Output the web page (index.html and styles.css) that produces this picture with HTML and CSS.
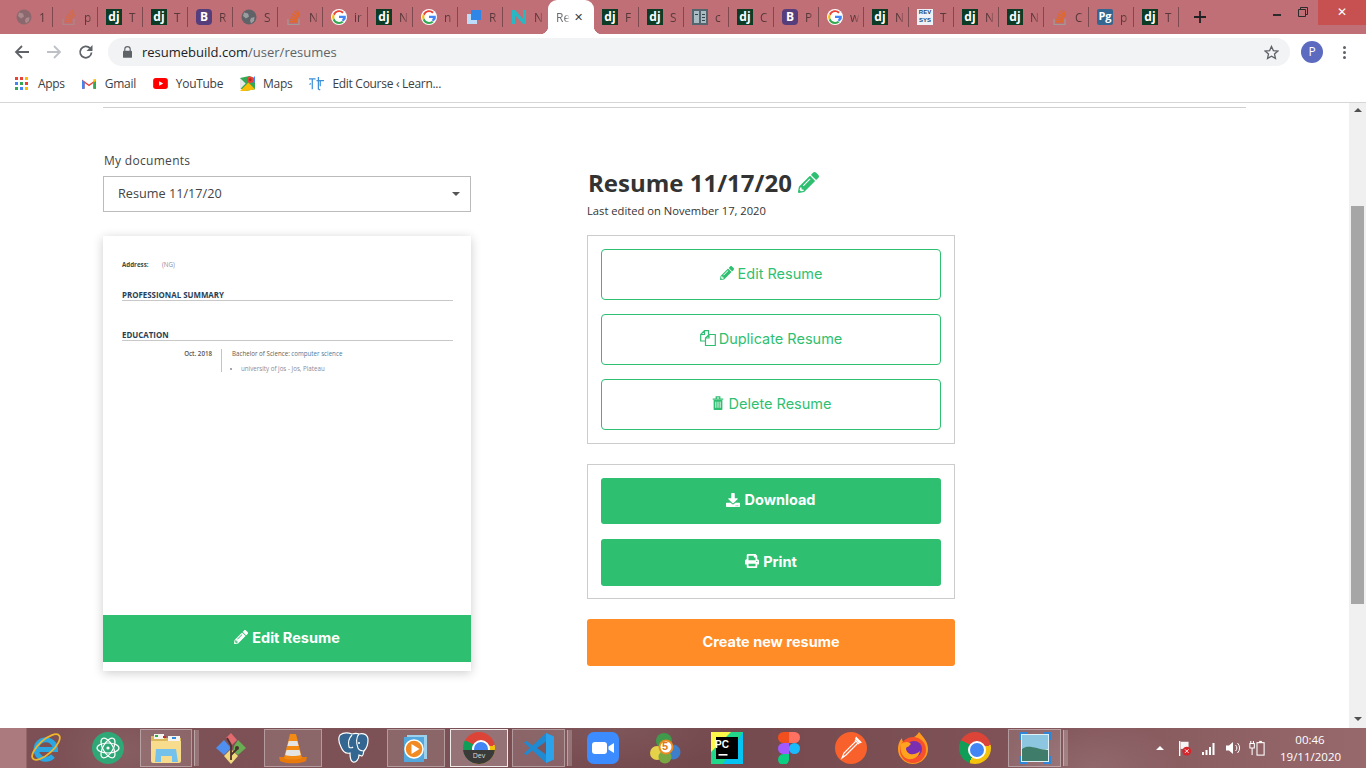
FILE: index.html
```html
<!DOCTYPE html>
<html lang="en">
<head>
    <meta charset="UTF-8">
    <title>Resume Build</title>
    <link rel="stylesheet" href="styles.css">
</head>
<body>
    <!-- shared icons -->
    <svg class="icon-defs" xmlns="http://www.w3.org/2000/svg">
        <symbol id="i-globe" viewBox="0 0 16 16">
            <circle cx="8" cy="8" r="7.5" fill="#5f6368"/>
            <path d="M3 3.5l4 1 1 3-3 2-3-2.5zM10 9l3.5-1-.5 4-3 2.5-1-3z" fill="#9a9da0"/>
        </symbol>
        <symbol id="i-stack" viewBox="0 0 16 16">
            <path d="M2 10v5.5h11V10" fill="none" stroke="#a29a98" stroke-width="1.2"/>
            <path d="M4 12h7v1.4H4zM4.200 9.600l6.900 1-.2 1.400-6.900-1zM5 7l6.500 2.300-.5 1.300-6.500-2.300zM6.500 4.300l5.900 3.700-.8 1.200-5.900-3.700zM9 1.800l4.500 5.300-1.100.9-4.500-5.300zM11.800.5l2.300 6.500-1.300.5-2.300-6.500z" fill="#e2672a"/>
        </symbol>
        <symbol id="i-google" viewBox="0 0 16 16">
            <circle cx="8" cy="8" r="8" fill="#fff"/>
            <path d="M8 3.100a4.900 4.900 0 0 1 3.300 1.300l1.500-1.500A7 7 0 0 0 2 5l1.800 1.400A4.600 4.600 0 0 1 8 3.100z" fill="#ea4335"/>
            <path d="M3.300 8c0-.6.100-1.100.3-1.600L1.800 5a7 7 0 0 0 0 6l1.800-1.400A4.700 4.700 0 0 1 3.300 8z" fill="#fbbc05"/>
            <path d="M8 12.900a4.700 4.700 0 0 1-4.400-3.300L1.800 11A7 7 0 0 0 8 15a6.700 6.700 0 0 0 4.600-1.700l-1.700-1.400a4.600 4.600 0 0 1-2.900 1z" fill="#34a853"/>
            <path d="M14.800 8.900V6.800H8v2.300h3.900a3.300 3.300 0 0 1-1.300 2l1.700 1.400c1.300-1 2.500-2.500 2.500-3.600z" fill="#4285f4"/>
        </symbol>
        <symbol id="i-pencil" viewBox="0 0 512 512">
            <path fill="currentColor" d="M497.900 142.100l-46.100 46.100c-4.700 4.700-12.300 4.700-17 0l-111-111c-4.700-4.700-4.700-12.300 0-17l46.100-46.100c18.700-18.700 49.100-18.700 67.900 0l60.100 60.100c18.800 18.700 18.800 49.100 0 67.900zM284.200 99.800L21.600 362.400.4 483.900c-2.900 16.400 11.400 30.600 27.800 27.800l121.500-21.300 262.600-262.600c4.700-4.700 4.700-12.300 0-17l-111-111c-4.800-4.700-12.400-4.700-17.100 0zM124.100 339.900c-5.500-5.500-5.500-14.300 0-19.800l154-154c5.500-5.500 14.300-5.500 19.800 0s5.500 14.300 0 19.800l-154 154c-5.500 5.500-14.300 5.500-19.800 0zM88 424h48v36.300l-64.500 11.300-31.100-31.100L51.700 376H88v48z"/>
        </symbol>
    </svg>

    <!-- browser tabs -->
    <div class="tabstrip">
        <div class="tab faded"><svg class="fav"><use href="#i-globe"/></svg><span class="tab-title">1</span></div>
        <div class="tab faded"><svg class="fav"><use href="#i-stack"/></svg><span class="tab-title">p</span></div>
        <div class="tab"><span class="fav fav-dj">dj</span><span class="tab-title">T</span></div>
        <div class="tab"><span class="fav fav-dj">dj</span><span class="tab-title">T</span></div>
        <div class="tab"><span class="fav fav-b">B</span><span class="tab-title">R</span></div>
        <div class="tab"><svg class="fav"><use href="#i-globe"/></svg><span class="tab-title">S</span></div>
        <div class="tab"><svg class="fav"><use href="#i-stack"/></svg><span class="tab-title">N</span></div>
        <div class="tab"><svg class="fav"><use href="#i-google"/></svg><span class="tab-title">ir</span></div>
        <div class="tab"><span class="fav fav-dj">dj</span><span class="tab-title">N</span></div>
        <div class="tab"><svg class="fav"><use href="#i-google"/></svg><span class="tab-title">n</span></div>
        <div class="tab">
            <svg class="fav" viewBox="0 0 16 16"><rect x="1" y="5" width="10" height="10" fill="#bcdcf7"/><rect x="5" y="1" width="10" height="10" fill="#2f86e6"/></svg>
            <span class="tab-title">R</span>
        </div>
        <div class="tab no-sep">
            <svg class="fav" viewBox="0 0 16 16"><path d="M1 1h3l8 9V1h3v14h-3L4 6v9H1z" fill="#2ab7c4"/></svg>
            <span class="tab-title">N</span>
        </div>
        <div class="tab tab-active"><span class="tab-title">Re</span><span class="tab-close">✕</span></div>
        <div class="tab"><span class="fav fav-dj">dj</span><span class="tab-title">F</span></div>
        <div class="tab"><span class="fav fav-dj">dj</span><span class="tab-title">S</span></div>
        <div class="tab">
            <svg class="fav" viewBox="0 0 16 16"><rect width="16" height="16" fill="#53666e"/><path d="M2 2h5v12H2zM9 2h5v12H9z" fill="#a9bcc4"/><path d="M10 5h3v1h-3zM10 8h3v1h-3zM10 11h3v1h-3zM3 5h3v1H3z" fill="#33444b"/></svg>
            <span class="tab-title">c</span>
        </div>
        <div class="tab"><span class="fav fav-dj">dj</span><span class="tab-title">C</span></div>
        <div class="tab"><span class="fav fav-b">B</span><span class="tab-title">P</span></div>
        <div class="tab"><svg class="fav"><use href="#i-google"/></svg><span class="tab-title">w</span></div>
        <div class="tab"><span class="fav fav-dj">dj</span><span class="tab-title">N</span></div>
        <div class="tab"><span class="fav fav-rev">REV<br>SYS</span><span class="tab-title">T</span></div>
        <div class="tab"><span class="fav fav-dj">dj</span><span class="tab-title">N</span></div>
        <div class="tab"><span class="fav fav-dj">dj</span><span class="tab-title">N</span></div>
        <div class="tab"><svg class="fav"><use href="#i-stack"/></svg><span class="tab-title">C</span></div>
        <div class="tab"><span class="fav fav-pg">Pg</span><span class="tab-title">p</span></div>
        <div class="tab"><span class="fav fav-dj">dj</span><span class="tab-title">T</span></div>
        <svg class="new-tab" viewBox="0 0 12 12"><path d="M6 0v12M0 6h12" stroke="#202124" stroke-width="1.800"/></svg>
        <div class="window-btns">
            <span class="win-min"></span>
            <svg class="win-restore" viewBox="0 0 10 10"><path d="M2.500 2.500V.5h7v7h-2M.5 2.500h7v7h-7z" fill="none" stroke="#2b2b2b"/></svg>
            <span class="win-close">✕</span>
        </div>
    </div>

    <!-- address bar -->
    <div class="toolbar">
        <svg class="nav-icon" viewBox="0 0 16 16"><path d="M15 8H2M8 2L2 8l6 6" fill="none" stroke="#5f6368" stroke-width="1.800"/></svg>
        <svg class="nav-icon" viewBox="0 0 16 16"><path d="M1 8h13M8 2l6 6-6 6" fill="none" stroke="#bdc1c6" stroke-width="1.800"/></svg>
        <svg class="nav-icon" viewBox="0 0 16 16"><path d="M13.500 8.500A5.700 5.700 0 1 1 12 4.200" fill="none" stroke="#5f6368" stroke-width="1.800"/><path d="M14.500 1v6h-6z" fill="#5f6368"/></svg>
        <div class="omnibox">
            <svg class="lock" viewBox="0 0 10 13"><path d="M2 5.500V3.500a3 3 0 0 1 6 0v2" fill="none" stroke="#5f6368" stroke-width="1.300"/><rect y="5" width="10" height="8" rx="1" fill="#5f6368"/></svg>
            <span class="url">resumebuild.com<span class="url-path">/user/resumes</span></span>
            <svg class="star" viewBox="0 0 16 16"><path d="M8 1.500l2 4.400 4.800.5-3.600 3.200 1 4.700L8 11.900l-4.200 2.400 1-4.700L1.200 6.400 6 5.900z" fill="none" stroke="#5f6368" stroke-width="1.400"/></svg>
        </div>
        <span class="avatar">P</span>
        <span class="menu-dots"><i></i><i></i><i></i></span>
    </div>

    <!-- bookmarks -->
    <div class="bookmarks">
        <a class="bm bm-apps">
            <svg viewBox="0 0 13 13">
                <path d="M0 0h3v3H0z" fill="#ea4335"/><path d="M5 0h3v3H5z" fill="#ea4335"/><path d="M10 0h3v3h-3z" fill="#fbbc05"/>
                <path d="M0 5h3v3H0z" fill="#4285f4"/><path d="M5 5h3v3H5z" fill="#34a853"/><path d="M10 5h3v3h-3z" fill="#ea4335"/>
                <path d="M0 10h3v3H0z" fill="#34a853"/><path d="M5 10h3v3H5z" fill="#4285f4"/><path d="M10 10h3v3h-3z" fill="#fbbc05"/>
            </svg>
            Apps
        </a>
        <a class="bm bm-gmail">
            <svg viewBox="0 0 16 12"><path d="M0 1.500L8 7l8-5.500V12h-3V5.500L8 9 3 5.500V12H0z" fill="#ea4335"/><path d="M0 2v10h3V4.500z" fill="#4285f4"/><path d="M16 2v10h-3V4.500z" fill="#34a853"/><path d="M13 1l3 0v2l-3 2z" fill="#fbbc05"/></svg>
            Gmail
        </a>
        <a class="bm bm-youtube">
            <svg viewBox="0 0 16 12"><rect width="16" height="12" rx="3" fill="#f00"/><path d="M6.500 3.500v5L11 6z" fill="#fff"/></svg>
            YouTube
        </a>
        <a class="bm bm-maps">
            <svg viewBox="0 0 16 16"><path d="M0 2l10-2 6 3v11l-10 2-6-3z" fill="#34a853"/><path d="M0 16l9-9 7 7-10 2z" fill="#fbbc05"/><path d="M9 7l7-7v7z" fill="#4285f4"/><path d="M0 2l6 6-6 6z" fill="#e9e9e9"/><circle cx="11" cy="4" r="3.500" fill="#ea4335"/><circle cx="11" cy="4" r="1.300" fill="#a52714"/></svg>
            Maps
        </a>
        <a class="bm bm-course">
            <svg viewBox="0 0 16 16"><path d="M0 3h7M3.500 3v11M2 8l-1.500 1M10 1v13l2 1M8 5h8M12 5v6" fill="none" stroke="#3a8fd9" stroke-width="1.300"/></svg>
            Edit Course ‹ Learn...
        </a>
    </div>

    <!-- page -->
    <div class="viewport">
        <main class="page">
            <hr class="page-rule">
            <div class="columns">
                <section class="col">
                    <label class="doc-label" for="doc-select">My documents</label>
                    <div class="select-wrap">
                        <select id="doc-select" class="doc-select">
                            <option>Resume 11/17/20</option>
                        </select>
                    </div>
                    <div class="preview">
                        <div class="sheet">
                            <p class="sheet-address"><b>Address:</b><span>(NG)</span></p>
                            <h4 class="sheet-heading">PROFESSIONAL SUMMARY</h4>
                            <h4 class="sheet-heading sheet-edu">EDUCATION</h4>
                            <div class="edu-row">
                                <div class="edu-date">Oct. 2018</div>
                                <div class="edu-body">
                                    <p class="edu-degree">Bachelor of Science: <span>computer science</span></p>
                                    <ul class="edu-list"><li>university of jos - Jos, Plateau</li></ul>
                                </div>
                            </div>
                        </div>
                        <a class="btn btn-solid btn-preview"><svg class="btn-icon"><use href="#i-pencil"/></svg>Edit Resume</a>
                    </div>
                </section>

                <section class="col">
                    <h1 class="resume-title">Resume 11/17/20 <svg class="title-icon"><use href="#i-pencil"/></svg></h1>
                    <p class="last-edited">Last edited on November 17, 2020</p>

                    <div class="action-box">
                        <a class="btn btn-outline"><svg class="btn-icon"><use href="#i-pencil"/></svg>Edit Resume</a>
                        <a class="btn btn-outline">
                            <svg class="btn-icon icon-copy" viewBox="0 0 16 16"><path d="M5.500 11H.7V4.500L4.500.7h4v3.600M4.500.7v3.800H.7M5.500 11V8L9 4.500h6.300v11H5.500zM9 4.500V8H5.500" fill="none" stroke="currentColor" stroke-width="1.200"/></svg>Duplicate Resume
                        </a>
                        <a class="btn btn-outline">
                            <svg class="btn-icon" viewBox="0 0 14 16"><path d="M1 3.500h12M5 3.500V1h4v2.500" fill="none" stroke="currentColor" stroke-width="1.500"/><path d="M2 4.500h10V15a1 1 0 0 1-1 1H3a1 1 0 0 1-1-1z" fill="currentColor"/><path d="M4.500 6.500v7M7 6.500v7M9.500 6.500v7" stroke="#fff"/></svg>Delete Resume
                        </a>
                    </div>

                    <div class="action-box action-box-solid">
                        <a class="btn btn-solid btn-download">
                            <svg class="btn-icon" viewBox="0 0 512 512"><path fill="currentColor" d="M216 0h80c13.300 0 24 10.700 24 24v168h87.700c17.800 0 26.700 21.500 14.100 34.100L269.700 378.300c-7.500 7.500-19.800 7.500-27.300 0L90.100 226.100c-12.600-12.600-3.700-34.100 14.100-34.100H192V24c0-13.300 10.700-24 24-24zm296 376v112c0 13.300-10.700 24-24 24H24c-13.300 0-24-10.700-24-24V376c0-13.300 10.700-24 24-24h146.700l49 49c20.100 20.100 52.500 20.100 72.600 0l49-49H488c13.300 0 24 10.700 24 24zm-124 88c0-11-9-20-20-20s-20 9-20 20 9 20 20 20 20-9 20-20zm64 0c0-11-9-20-20-20s-20 9-20 20 9 20 20 20 20-9 20-20z"/></svg>Download
                        </a>
                        <a class="btn btn-solid btn-print">
                            <svg class="btn-icon" viewBox="0 0 512 512"><path fill="currentColor" d="M448 192V77.250c0-8.490-3.370-16.620-9.370-22.630L393.370 9.370c-6-6-14.140-9.370-22.630-9.370H96C78.330 0 64 14.330 64 32v160c-35.350 0-64 28.650-64 64v112c0 8.840 7.160 16 16 16h48v96c0 17.670 14.330 32 32 32h320c17.670 0 32-14.330 32-32v-96h48c8.840 0 16-7.160 16-16V256c0-35.350-28.650-64-64-64zm-64 256H128v-96h256v96zm0-224H128V64h192v48c0 8.840 7.160 16 16 16h48v96zm48 72c-13.250 0-24-10.750-24-24 0-13.260 10.750-24 24-24s24 10.740 24 24c0 13.250-10.750 24-24 24z"/></svg>Print
                        </a>
                    </div>

                    <a class="btn btn-create">Create new resume</a>
                </section>
            </div>
        </main>
        <div class="scrollbar">
            <span class="arrow-up"></span>
            <span class="thumb"></span>
            <span class="arrow-down"></span>
        </div>
    </div>

    <!-- windows taskbar -->
    <footer class="taskbar">
        <span class="task">
            <svg viewBox="0 0 32 32"><path d="M6.500 17.500h19a9.700 9.700 0 1 0-2.500 6.500" fill="none" stroke="#2aa7e2" stroke-width="5"/><ellipse cx="16" cy="15" rx="17.500" ry="7" transform="rotate(-42 16 15)" fill="none" stroke="#efb52c" stroke-width="1.800"/></svg>
        </span>
        <span class="task">
            <svg viewBox="0 0 32 32"><circle cx="16" cy="16" r="16" fill="#2fa877"/><g fill="none" stroke="#fff" stroke-width="1.200"><ellipse cx="16" cy="16" rx="11" ry="5"/><ellipse cx="16" cy="16" rx="11" ry="5" transform="rotate(60 16 16)"/><ellipse cx="16" cy="16" rx="11" ry="5" transform="rotate(120 16 16)"/></g><circle cx="16" cy="16" r="1.600" fill="#fff"/></svg>
        </span>
        <span class="task task-open task-stack">
            <svg viewBox="0 0 32 32"><path d="M1 4h13l2 2h15v10H1z" fill="#d9b75a"/><path d="M4 2h10v5H4z" fill="#f4f4f0"/><path d="M5 3h3v2H5z" fill="#2eae3e"/><path d="M18 4h12v5H18z" fill="#f4f4f0"/><path d="M22 5h4v2h-4z" fill="#2e8ee0"/><path d="M13 4h3v2h-3z" fill="#c9302c"/><path d="M1 9h30v20a2 2 0 0 1-2 2H3a2 2 0 0 1-2-2z" fill="#f6dc8c"/><path d="M6 17h20l2 13h-6v-6H11v6H5z" fill="#74c2ec"/></svg>
        </span>
        <span class="task">
            <svg viewBox="0 0 32 32"><path d="M16 1l-5 5 6 7 5-5z" fill="#e36a6f"/><path d="M9 8l7 8-7 7-8-7z" fill="#4f8ff0"/><path d="M23 8l8 8-8 7-5-4 1-5z" fill="#69ae52"/><path d="M9 24l7-7 7 7-7 8z" fill="#f0d97c"/><path d="M16 13v15M12 6l4 7M22 17l-6 6" stroke="#4d3030" stroke-width="1.800"/><circle cx="22" cy="16" r="2" fill="#4d3030"/></svg>
        </span>
        <span class="task task-open task-vlc">
            <svg viewBox="0 0 32 32"><path d="M2 25h28l-1 4c-5 3-21 3-26 0z" fill="#e8790c"/><path d="M13 2h6l6 24c-3 2-15 2-18 0z" fill="#f28a14"/><path d="M11.700 9h8.600l1.300 5H10.400zM9.500 18h13l1.300 5c-4 1.400-11.600 1.400-15.600 0z" fill="#e4e4e4"/></svg>
        </span>
        <span class="task">
            <svg viewBox="0 0 32 32"><path d="M2 3c4-3 9-2 12-1 3-1 5-1 7 0 4-1 9 0 9 6 0 5-2 9-4 11-1 1 0 4-2 5l-3-1c0 4-3 8-6 7-3-1-3-5-3-9-4 1-7-1-9-6C1 11 0 6 2 3z" fill="#336791" stroke="#fff" stroke-width="1.200"/><path d="M14 3c-3 3-4 8-3 12 1 1 3 1 4 0M21 2c-3 3-3 9-1 14 1 2 3 3 6 3" fill="none" stroke="#fff" stroke-width="1.100"/><circle cx="21" cy="11" r="1" fill="#fff"/></svg>
        </span>
        <span class="task task-open task-media">
            <svg viewBox="0 0 32 32"><path d="M7 3h20v24H7z" fill="#9cd0ec"/><path d="M4 5h20v25H4z" fill="#52a8dc"/><circle cx="14" cy="17" r="9" fill="#f28a24" stroke="#fff" stroke-width="1.500"/><path d="M11.500 12v10l8-5z" fill="#fff"/></svg>
        </span>
        <span class="task task-open task-lit">
            <span class="chrome-logo chrome-dev"><span class="dev-band">Dev</span></span>
        </span>
        <span class="task task-open task-stack task-code">
            <svg viewBox="0 0 32 32"><path d="M23 1l8 3.500v23L23 31 9.500 18.500 3.500 23 1 21.500 7 16 1 10.500 3.500 9l6 4.500z" fill="#1f8ad2"/><path d="M23 1l8 3.500v23L23 31z" fill="#2aa3ec"/><path d="M23 9.500L14 16l9 6.500z" fill="#7b5559"/></svg>
        </span>
        <span class="task">
            <svg viewBox="0 0 32 32"><rect width="32" height="32" rx="7" fill="#3d8cff"/><rect x="5" y="10" width="15" height="12" rx="3" fill="#fff"/><path d="M21.500 14.500L27 11v10l-5.500-3.500z" fill="#fff"/></svg>
        </span>
        <span class="task">
            <svg viewBox="0 0 32 32"><circle cx="15" cy="9" r="8" fill="#3f9a4b"/><circle cx="8" cy="21" r="7" fill="#e6d24a"/><circle cx="24" cy="20" r="7.500" fill="#3d7fcb"/><circle cx="16" cy="25" r="6.500" fill="#78a843"/><circle cx="17" cy="15" r="6.500" fill="#fff" stroke="#ee8a22" stroke-width="2"/></svg>
            <span class="mt-five">5</span>
        </span>
        <span class="task">
            <svg viewBox="0 0 32 32"><path d="M0 0h32v22L22 32H0z" fill="#21d789"/><path d="M0 0h20L0 20z" fill="#fcf84a"/><path d="M32 0v32H12z" fill="#07c3f2"/><rect x="5" y="5" width="22" height="22" fill="#000"/><rect x="7.500" y="22" width="9" height="1.600" fill="#fff"/></svg>
            <span class="pc-mark">PC</span>
        </span>
        <span class="task">
            <svg viewBox="0 0 22 32"><path d="M11 0h5.500a5.500 5.500 0 0 1 0 11H11z" fill="#ff7262"/><path d="M11 0H5.500a5.500 5.500 0 0 0 0 11H11z" fill="#f24e1e"/><path d="M11 11H5.500a5.500 5.500 0 0 0 0 11H11z" fill="#a259ff"/><circle cx="16.500" cy="16.500" r="5.500" fill="#1abcfe"/><path d="M5.500 22H11v5a5.500 5.500 0 1 1-5.500-5z" fill="#0acf83"/></svg>
        </span>
        <span class="task">
            <svg viewBox="0 0 32 32"><circle cx="16" cy="16" r="16" fill="#f8602c"/><path d="M7 26l2-5L21 9l2 2-12 12zM21 9l-1-1M23 11l1 1" fill="none" stroke="#fff" stroke-width="1.200"/><path d="M21 4.500l6 6-2.500 1-4.500-4.500z" fill="#fff"/></svg>
        </span>
        <span class="task">
            <svg viewBox="0 0 32 32"><path d="M22 0c4 5 9 9 9 17a15 15 0 0 1-30 0c0-4 1-8 4-11 0 3 1 4 3 5 3-4 11-5 14-11z" fill="#ff9a1f"/><circle cx="16" cy="18" r="13" fill="#f6502c"/><circle cx="17" cy="17" r="8" fill="#7a2fb0"/><path d="M4 12c3-2 7-3 10 0-2 1-2 3-4 3-2 1-1 5 3 7 4 1 8-1 10-3-1 6-7 9-12 8C6 26 2 19 4 12z" fill="#ffa41c"/></svg>
        </span>
        <span class="task"><span class="chrome-logo"></span></span>
        <span class="task task-open task-stack task-photos">
            <svg viewBox="0 0 32 32"><rect x="2" y="2" width="28" height="28" fill="#dff0f6"/><path d="M3 3h26v14H3z" fill="#8cc6e0"/><path d="M3 17c7-5 13 0 26 1v11H3z" fill="#3f7d6a"/><path d="M1 8V1h7M24 1h7v7M31 24v7h-7M8 31H1v-7" fill="none" stroke="#2f86d6" stroke-width="2"/></svg>
        </span>

        <div class="tray">
            <span class="tray-arrow"></span>
            <svg class="tray-icon" viewBox="0 0 16 18"><path d="M2 1v17" stroke="#fff" stroke-width="1.500"/><path d="M3 2h9v8H3z" fill="#f4f4f4"/><circle cx="10" cy="12.500" r="5" fill="#d6262b"/><path d="M8 10.500l4 4M12 10.500l-4 4" stroke="#fff"/></svg>
            <svg class="tray-icon" viewBox="0 0 16 16"><path d="M1 12h2v3H1zM4.500 10h2v5h-2zM8 7h2v8H8zM11.500 3h2v12h-2z" fill="#fff"/></svg>
            <svg class="tray-icon" viewBox="0 0 16 16"><path d="M1 5.500h3L8 2v12l-4-3.500H1z" fill="#fff"/><path d="M10.500 5a4 4 0 0 1 0 6M12.500 3a7 7 0 0 1 0 10" fill="none" stroke="#fff"/></svg>
            <svg class="tray-icon" viewBox="0 0 18 18"><path d="M2 1v3M5 1v3M1 4h5v5H1zM3.500 9v8" fill="none" stroke="#fff" stroke-width="1.200"/><rect x="9" y="3" width="8" height="14" fill="none" stroke="#fff" stroke-width="1.200"/><path d="M11.500 1h3v2h-3z" fill="#fff"/></svg>
            <div class="clock"><div>00:46</div><div>19/11/2020</div></div>
        </div>
    </footer>
</body>
</html>
```

FILE: styles.css
```css
* {
    box-sizing: border-box;
}

html, body {
    height: 100%;
}

body {
    margin: 0;
    height: 768px;
    display: flex;
    flex-direction: column;
    overflow: hidden;
    background: white;
    font-family: 'Open Sans', 'Noto Sans', sans-serif;
    color: #333;
}

a {
    text-decoration: none;
}

.icon-defs {
    display: none;
}

/* tabs */
.tabstrip {
    height: 34px;
    flex: none;
    display: flex;
    align-items: center;
    padding-left: 8px;
    background: #bf6f75;
    font-size: 12px;
}

.tab {
    width: 45px;
    height: 20px;
    flex: none;
    display: flex;
    align-items: center;
    padding-left: 8px;
    border-right: 1px solid #7d4a4f;
    overflow: hidden;
}

.tab.no-sep {
    border-right: none;
}

.fav {
    width: 16px;
    height: 16px;
    flex: none;
    display: block;
}

.faded .fav {
    opacity: 0.55;
}

.tab-title {
    width: 10px;
    margin-left: 7px;
    color: #3f2a2d;
    white-space: nowrap;
    overflow: hidden;
    opacity: 0.8;
    -webkit-mask-image: linear-gradient(90deg, black 45%, transparent);
    mask-image: linear-gradient(90deg, black 45%, transparent);
}

.fav-dj {
    background: #0c3c26;
    color: white;
    font: bold 12px/15px 'Open Sans', sans-serif;
    text-align: center;
}

.fav-b {
    background: #563d7c;
    border-radius: 4px;
    color: white;
    font: bold 12px/16px 'Open Sans', sans-serif;
    text-align: center;
}

.fav-pg {
    background: #336791;
    border-radius: 2px;
    color: white;
    font: bold 11px/14px 'Open Sans', sans-serif;
    text-align: center;
}

.fav-rev {
    background: #eef2f6;
    color: #1b3f76;
    font: bold 6px/7.500px 'Liberation Sans', sans-serif;
    text-align: center;
}

.tab-active {
    position: relative;
    width: 46px;
    height: 34px;
    align-self: flex-end;
    background: white;
    border: none;
    border-radius: 9px 9px 0 0;
    overflow: visible;
}

.tab-active::before,
.tab-active::after {
    content: "";
    position: absolute;
    bottom: 0;
    width: 8px;
    height: 8px;
}

.tab-active::before {
    left: -8px;
    background: radial-gradient(circle at 0 0, transparent 8px, white 8.500px);
}

.tab-active::after {
    right: -8px;
    background: radial-gradient(circle at 100% 0, transparent 8px, white 8.500px);
}

.tab-active .tab-title {
    margin-left: 0;
    width: 14px;
    color: #45494d;
    -webkit-mask-image: linear-gradient(90deg, black 65%, transparent);
    mask-image: linear-gradient(90deg, black 65%, transparent);
}

.tab-close {
    margin-left: 4px;
    color: #3c4043;
    font: bold 11px 'DejaVu Sans', sans-serif;
}

.new-tab {
    width: 12px;
    height: 12px;
    margin-left: 15px;
    flex: none;
}

.window-btns {
    margin-left: auto;
    align-self: flex-start;
    display: flex;
    align-items: flex-start;
}

.win-min {
    width: 8px;
    height: 2px;
    margin: 14px 0 0;
    background: #2b2b2b;
}

.win-restore {
    width: 10px;
    height: 10px;
    margin: 7px 10px 0 17px;
}

.win-close {
    width: 48px;
    height: 25px;
    background: #c75050;
    color: white;
    font: 12px/25px 'DejaVu Sans', sans-serif;
    text-align: center;
}

/* address bar */
.toolbar {
    height: 36px;
    flex: none;
    display: flex;
    align-items: center;
    padding: 0 0 0 14px;
    background: white;
}

.nav-icon {
    width: 16px;
    height: 16px;
    margin-right: 16px;
    flex: none;
}

.omnibox {
    width: 1182px;
    height: 28px;
    margin-left: -2px;
    display: flex;
    align-items: center;
    padding: 0 11px 0 15px;
    border-radius: 14px;
    background: #f1f3f4;
}

.lock {
    width: 9px;
    height: 12px;
    flex: none;
}

.url {
    margin-left: 10px;
    font-size: 13px;
    color: #202124;
}

.url-path {
    color: #5f6368;
}

.star {
    width: 15px;
    height: 15px;
    margin-left: auto;
}

.avatar {
    width: 22px;
    height: 22px;
    margin-left: 11px;
    border-radius: 50%;
    background: #5c6bc0;
    color: white;
    font-size: 12px;
    line-height: 22px;
    text-align: center;
}

.menu-dots {
    margin-left: 20px;
    display: flex;
    flex-direction: column;
    gap: 2px;
}

.menu-dots i {
    width: 3px;
    height: 3px;
    border-radius: 50%;
    background: #5f6368;
}

/* bookmarks */
.bookmarks {
    height: 33px;
    flex: none;
    display: flex;
    align-items: center;
    padding: 0 0 5px 15px;
    border-bottom: 1px solid #d6d6d6;
    font-size: 12px;
    color: #3c4043;
    background: white;
}

.bm {
    display: flex;
    align-items: center;
    letter-spacing: -0.300px;
    white-space: nowrap;
}

.bm svg {
    flex: none;
    margin-right: 10px;
}

.bm-apps svg {
    width: 13px;
    height: 13px;
}

.bm-gmail {
    margin-left: 17px;
}

.bm-gmail svg {
    width: 14px;
    height: 11px;
    margin-right: 9px;
}

.bm-youtube {
    margin-left: 17px;
}

.bm-youtube svg {
    width: 15px;
    height: 11px;
    margin-right: 8px;
}

.bm-maps {
    margin-left: 17px;
}

.bm-maps svg {
    width: 15px;
    height: 15px;
    margin-right: 8px;
}

.bm-course {
    margin-left: 17px;
}

.bm-course svg {
    width: 15px;
    height: 15px;
    margin-right: 8px;
}

/* page */
.viewport {
    flex: 1;
    min-height: 0;
    display: flex;
}

.page {
    flex: 1;
    min-width: 0;
    overflow: hidden;
    padding: 4px 0 0 103px;
}

.page-rule {
    width: 1143px;
    height: 1px;
    margin: 0;
    border: none;
    background: #cfcfcf;
}

.columns {
    display: flex;
    gap: 116px;
}

.col {
    width: 368px;
    flex: none;
}

.doc-label {
    display: block;
    margin: 44px 0 0 1px;
    font-size: 12px;
    line-height: 18px;
    letter-spacing: 0.300px;
    color: #444;
}

.select-wrap {
    position: relative;
    margin-top: 6px;
}

.select-wrap::after {
    content: "";
    position: absolute;
    right: 11px;
    top: 16px;
    border: 4px solid transparent;
    border-top: 4px solid #555;
    border-left-width: 4px;
}

.doc-select {
    width: 100%;
    height: 36px;
    padding: 0 0 2px 14px;
    border: 1px solid #bbb;
    border-radius: 0;
    background: white;
    appearance: none;
    font-family: 'Open Sans', sans-serif;
    font-size: 12.700px;
    color: #444;
}

.preview {
    height: 435px;
    margin-top: 24px;
    display: flex;
    flex-direction: column;
    padding-bottom: 9px;
    background: white;
    box-shadow: 0 2px 10px rgba(0, 0, 0, 0.2);
}

.sheet {
    flex: 1;
    padding: 24px 18px 0 19px;
    font-size: 6.200px;
    color: #555;
}

.sheet p {
    margin: 0;
}

.sheet-address {
    display: flex;
    line-height: 10px;
}

.sheet-address b {
    width: 40px;
    color: #3d4a3d;
}

.sheet-address span {
    color: #8a8aa0;
}

.sheet-heading {
    margin: 20px 0 0;
    font-size: 7.900px;
    line-height: 10px;
    border-bottom: 1px solid #c8c8c8;
    color: #2a3f55;
}

.sheet-edu {
    margin-top: 29px;
}

.edu-row {
    display: flex;
    margin-top: 8px;
}

.edu-date {
    width: 90px;
    text-align: right;
    font-weight: 600;
    line-height: 9px;
    color: #555;
}

.edu-body {
    margin-left: 9px;
    height: 23px;
    padding-left: 10px;
    border-left: 1px solid #c4c4c4;
}

.edu-degree {
    line-height: 9px;
    color: #6a5a4a;
}

.edu-degree span {
    color: #4a7aa0;
}

.edu-list {
    margin: 6px 0 0;
    padding-left: 9px;
    color: #8a8a9a;
    line-height: 9px;
}

.btn {
    display: flex;
    align-items: center;
    justify-content: center;
    padding-bottom: 3px;
    border-radius: 3px;
    font-family: Inter, Roboto, sans-serif;
    font-size: 14.500px;
}

.btn-icon {
    width: 14px;
    height: 14px;
    margin-right: 4px;
    flex: none;
}

.btn-solid {
    height: 47px;
    background: #2fbf71;
    color: white;
    font-weight: 700;
}

.btn-preview {
    border-radius: 0;
}

.resume-title {
    display: flex;
    align-items: center;
    margin: 0;
    padding: 58px 0 0 1px;
    font-size: 24px;
    line-height: 33px;
    font-weight: 700;
    color: #333;
    white-space: pre;
}

.title-icon {
    width: 21px;
    height: 21px;
    color: #2fbf71;
}

.last-edited {
    margin: 4px 0 0;
    font-size: 11.200px;
    line-height: 15px;
    color: #333;
}

.action-box {
    margin-top: 17px;
    display: flex;
    flex-direction: column;
    gap: 14px;
    padding: 13px;
    border: 1px solid #ccc;
}

.btn-outline {
    height: 51px;
    border: 1px solid #2fbf71;
    border-radius: 4px;
    color: #2fbf71;
}

.icon-copy {
    width: 16px;
    height: 16px;
    margin-right: 3px;
}

.action-box-solid {
    margin-top: 20px;
    gap: 15px;
    padding-bottom: 12px;
}

.btn-download {
    height: 46px;
}

.btn-create {
    height: 47px;
    margin-top: 20px;
    background: #ff8c26;
    color: white;
    font-weight: 700;
}

/* scrollbar */
.scrollbar {
    width: 17px;
    flex: none;
    display: flex;
    flex-direction: column;
    align-items: center;
    background: #f0f0f0;
}

.arrow-up {
    margin-top: 5px;
    border: 4px solid transparent;
    border-top: none;
    border-bottom: 4px solid #505050;
}

.thumb {
    width: 13px;
    height: 398px;
    margin-top: 94px;
    background: #a6a6a6;
}

.arrow-down {
    margin-top: 113px;
    border: 4px solid transparent;
    border-bottom: none;
    border-top: 4px solid #505050;
}

/* taskbar */
.taskbar {
    height: 40px;
    flex: none;
    display: flex;
    align-items: center;
    padding-left: 15px;
    color: white;
    background:
        radial-gradient(ellipse 70px 50px at 125px 60%, rgba(255, 255, 255, 0.08), transparent),
        radial-gradient(ellipse 120px 40px at 620px 0, rgba(255, 255, 255, 0.06), transparent),
        radial-gradient(ellipse 90px 50px at 1090px 100%, rgba(255, 255, 255, 0.1), transparent),
        linear-gradient(90deg, #ab7a7e 0, #ab7a7e 26px, #7c5054 27px, #7d5256 400px, #74494d 700px, #7e5256 1000px, #97696d 1366px);
}

.task {
    position: relative;
    width: 62px;
    height: 38px;
    flex: none;
    display: flex;
    align-items: center;
    justify-content: center;
}

.task svg {
    width: 32px;
    height: 32px;
}

.task-open {
    width: 58px;
    margin: 0 1px;
    border: 1px solid rgba(255, 255, 255, 0.35);
    background: rgba(255, 255, 255, 0.12);
}

.task-stack {
    width: 52px;
    margin-right: 8px;
    box-shadow: 3px 0 0 -1px rgba(128, 88, 92, 1), 4px 0 0 -1px rgba(255, 255, 255, 0.35), 8px 0 0 -1px rgba(255, 255, 255, 0.2);
}

.task-vlc {
    margin-left: 2px;
}

.task-media {
    margin-left: 2px;
}

.task-code {
    width: 53px;
    margin-left: 0;
    margin-right: 7px;
}

.task-photos {
    width: 53px;
    margin-left: 2px;
    margin-right: 0;
}

.task-lit {
    margin: 0 4px;
    border: 1px solid rgba(255, 255, 255, 0.85);
    background: rgba(255, 255, 255, 0.2);
}

.chrome-logo {
    position: relative;
    width: 32px;
    height: 32px;
    display: block;
    border-radius: 50%;
    overflow: hidden;
    background: conic-gradient(from -60deg, #db4437 0 140deg, #f4c20d 140deg 260deg, #0f9d58 260deg 360deg);
}

.chrome-logo::after {
    content: "";
    position: absolute;
    left: 9px;
    top: 9px;
    width: 14px;
    height: 14px;
    border: 2px solid white;
    border-radius: 50%;
    background: #4285f4;
}

.chrome-dev::after {
    top: 8px;
}

.dev-band {
    position: absolute;
    left: 0;
    right: 0;
    bottom: 0;
    height: 14px;
    z-index: 1;
    background: #3a3a38;
    color: #ddd;
    font-size: 7px;
    line-height: 12px;
    text-align: center;
}

.mt-five {
    position: absolute;
    left: 28px;
    top: 11px;
    color: #e07a14;
    font: bold 11px 'Liberation Sans', sans-serif;
}

.pc-mark {
    position: absolute;
    left: 19px;
    top: 10px;
    color: white;
    font: bold 10px 'Liberation Sans', sans-serif;
}

.tray {
    margin-left: auto;
    display: flex;
    align-items: center;
    padding-right: 26px;
}

.tray-arrow {
    margin-right: 13px;
    border: 4px solid transparent;
    border-top: none;
    border-bottom: 4px solid white;
}

.tray-icon {
    width: 16px;
    height: 16px;
    margin-right: 8px;
}

.clock {
    width: 60px;
    margin-left: 7px;
    font-size: 11.500px;
    line-height: 17px;
    text-align: center;
}
```
